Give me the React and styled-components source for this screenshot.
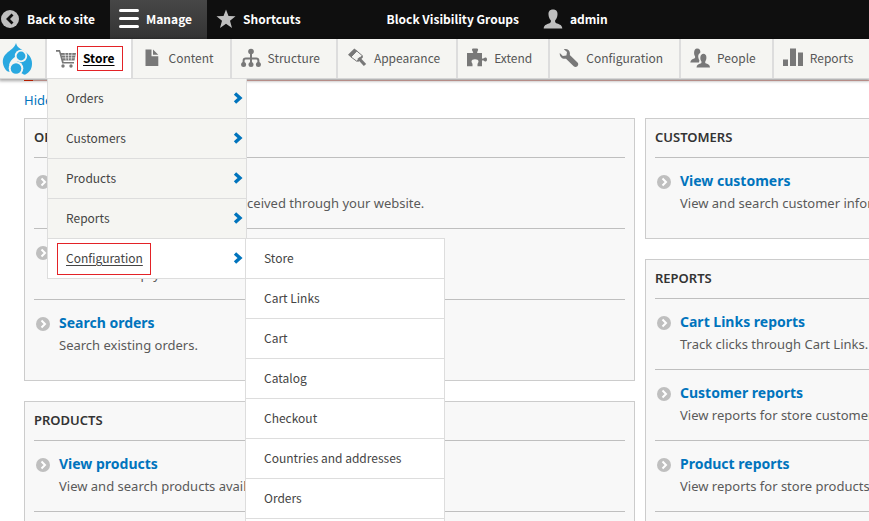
import React from 'react';
import styled, { createGlobalStyle, css } from 'styled-components';

const toolbarFont = '"Noto Sans CJK SC", "Noto Sans", sans-serif';
const bodyFont = '"Noto Sans", "Open Sans", sans-serif';

const Global = createGlobalStyle`
  * { box-sizing: border-box; }
  body { margin: 0; background: #fff; font-family: ${bodyFont}; color: #333; }
  ul { list-style: none; margin: 0; padding: 0; }
  a { text-decoration: none; color: inherit; }
`;

const Page = styled.div`
  height: 100vh;
  overflow: hidden;
`;

const TopBar = styled.nav`
  display: flex;
  height: 39px;
  background: #0f0f0f;
  color: #fff;
  font: 700 12px/38px ${toolbarFont};
  white-space: nowrap;
`;

const TopLink = styled.a`
  display: flex;
  align-items: center;
  gap: 7px;
  flex: none;
  padding: 0 15px 1px ${(p) => (p.$flush ? '0' : '9px')};
  ${(p) => p.$active && css`background: linear-gradient(#474747, #333);`}
  ${(p) => p.$spaced && css`margin-left: 62px;`}
`;

const Tray = styled.nav`
  position: relative;
  z-index: 2;
  display: flex;
  height: 40px;
  background: #f5f5f2;
  border-bottom: 1px solid #d6d6d6;
  box-shadow: 0 1px 3px 1px rgba(0, 0, 0, 0.35);
  font: 12px/36px ${toolbarFont};
  color: #565656;
  white-space: nowrap;
`;

const HomeLink = styled.a`
  flex: none;
  width: 47px;
  display: flex;
  align-items: center;
  border-right: 2px solid #ddd;
`;

const TrayItem = styled.div`
  position: relative;
  flex: none;
  border-right: 2px solid #ddd;
  background: ${(p) => (p.$active ? '#fff' : 'transparent')};
`;

const TrayLink = styled.a`
  display: flex;
  align-items: center;
  gap: 7px;
  height: 38px;
  padding: 0 16px 0 9px;
  ${(p) => p.$active && css`
    color: #000;
    font-weight: 700;
    text-decoration: underline;
    text-underline-offset: 2px;
  `}
`;

const Label = styled.span`
  position: relative;
`;

const Highlight = styled.span`
  position: absolute;
  inset: ${(p) => p.$inset};
  border: 1px solid #e32227;
  pointer-events: none;
`;

const Menu = styled.ul`
  position: absolute;
  top: 39px;
  left: 0;
  width: 200px;
  border: 1px solid #ddd;
  border-bottom: 0;
  background: #f5f5f2;
  color: #444;
`;

const SubMenu = styled(Menu)`
  top: -1px;
  left: 197px;
  padding-bottom: 40px;
  background: #fff;
`;

const MenuRow = styled.li`
  position: relative;
  border-bottom: 1px solid #ddd;
  background: ${(p) => (p.$active ? '#fff' : 'transparent')};
`;

const MenuLink = styled.a`
  display: flex;
  align-items: center;
  justify-content: space-between;
  height: 39px;
  padding: 0 3px 1px 18px;
  text-decoration: ${(p) => (p.$active ? 'underline' : 'none')};
  text-underline-offset: 2px;
`;

const Main = styled.main`
  min-width: 1280px;
  padding: 1px 24px 0;
`;

const MessageEdge = styled.div`
  height: 1px;
  border-left: 9px solid #e62600;
  background: #e8b4ae;
`;

const HideLink = styled.a`
  display: block;
  padding-top: 8px;
  height: 37px;
  font-size: 13px;
  line-height: 22px;
  color: #0074bd;
`;

const Columns = styled.div`
  display: grid;
  grid-template-columns: 1fr 1fr;
  gap: 10px;
  align-items: start;
`;

const Column = styled.div`
  display: grid;
  gap: 20px;
`;

const Panel = styled.section`
  padding: 0 9px 10px;
  border: 1px solid #ccc;
  background: #f8f8f8;
`;

const PanelTitle = styled.h2`
  margin: 0;
  height: 39px;
  border-bottom: 1px solid #bfbfbf;
  font: 600 13px/36px ${bodyFont};
  text-transform: uppercase;
`;

const Entry = styled.li`
  display: flex;
  gap: 9px;
  height: 70px;
  padding: 12px 0 0 2px;
  & + & {
    height: 71px;
    border-top: 1px solid #bfbfbf;
  }
`;

const EntryIcon = styled.svg`
  flex: none;
  margin-top: 5px;
`;

const EntryTitle = styled.a`
  display: block;
  font-weight: 700;
  font-size: 14px;
  line-height: 22px;
  color: #0074bd;
`;

const EntryText = styled.p`
  margin: 0;
  font-size: 13px;
  line-height: 22px;
  color: #5a5a5a;
  white-space: nowrap;
`;

const Svg = ({ children, size = 20, color = '#787878' }) => (
  <svg width={size} height={size} viewBox="0 0 20 20" fill={color} aria-hidden="true">{children}</svg>
);

const icons = {
  back: <><circle cx="10" cy="10" r="9" /><path d="M12.500 5.500 8 10l4.500 4.500" fill="none" stroke="#0f0f0f" strokeWidth="2.800" /></>,
  bars: <path d="M1.500 0h17a1.500 1.500 0 0 1 0 3h-17a1.500 1.500 0 0 1 0-3zM1.500 8h17a1.500 1.500 0 0 1 0 3h-17a1.500 1.500 0 0 1 0-3zM1.500 16h17a1.500 1.500 0 0 1 0 3h-17a1.500 1.500 0 0 1 0-3z" />,
  star: <path d="m10 .5 2.500 6.500 7 .2-5.500 4.500 2 7.300-6-4.200L4 19l2-7.300L.5 7.200l7-.2z" />,
  user: <path d="M10 .5c3.500 0 4.700 2.200 4.500 5-.1 2.500-1 4.500-2.300 5.700-.5 1.500.2 2.600 1.800 3.200 3 1 5 1.600 5.300 5H.7c.3-3.400 2.300-4 5.300-5 1.600-.6 2.300-1.700 1.800-3.200C6.500 10 5.600 8 5.500 5.500c-.2-2.800 1-5 4.500-5z" />,
  cart: <><path d="M0 2h4l1 3h15l-1.500 7.500H7.200l.4 1.500H18v1.500H6.200L3 3.800H0z" /><path d="M5.500 7.300h14M6 9.900h13M9 5l1 7.500M12.500 5v7.500M16 5l-.8 7.500" stroke="#fff" strokeWidth=".6" /><circle cx="7" cy="18" r="1.700" /><circle cx="15" cy="18" r="1.700" /></>,
  file: <path d="M3.500 1.500h6v6.800h6.800V18H3.500zM11 1.500l5.300 5.200H11z" />,
  tree: <><circle cx="10" cy="3.500" r="2.800" /><circle cx="2.600" cy="16.500" r="2.500" /><circle cx="10" cy="16.500" r="2.500" /><circle cx="17.400" cy="16.500" r="2.500" /><path d="M10 4v12M2.600 16v-3.300q0-2.200 2.200-2.200h10.400q2.200 0 2.200 2.200V16" fill="none" stroke="#787878" strokeWidth="2" /></>,
  brush: <><path d="M1 6.700 7.300.4l3 2.400L4.200 9.400z" /><path d="m9.800 3 5.400 4.600-5.500 5.600L4 9z" fill="#f5f5f2" stroke="#787878" strokeWidth="1" /><path d="m11.500 10 6.500 7" fill="none" stroke="#787878" strokeWidth="3.200" /><path d="m15.500 7.300-6 6.300 2 .2 4.500-4.500z" /></>,
  puzzle: <path d="M0 5h5.500c1 0 .8-1 .2-1.500C4.500 1.500 5 .5 6 .5h4c1.200 0 1.500 1.200.5 3-.6.800-.5 1.500.5 1.500h4v5c0 1 1 1 1.700.3C18 9 20 9.200 20 11.500s-2 2.600-3.300 1.300C16 12 15 12.200 15 13.200v5h-4.500v-2c0-1.200 1-1.400 1-2.700 0-1.500-1.500-2.300-3.500-2.300s-3.500.8-3.500 2.300c0 1.300 1 1.500 1 2.700v2H0z" />,
  wrench: <path d="M4.800 1.200C8.700.2 11.700 3 10.800 7l7.700 7.500c2.300 2.500-1.300 6-3.800 3.800L7 10.700C3.200 11.500.3 8.700.8 5l3 3 3.600-.6.600-3.500z" />,
  people: <><path d="M7 .5c2.800 0 3.800 2 3.200 4.500-2.500 1.200-2.400 4.500-.8 7.200L9 14.500H.3c.2-2.600 2-3.300 4-4 1-.4 1-1.500.6-2.500C3.700 6.800 3.500.5 7 .5z" /><path d="M13.500 5.800c3.500 0 3.500 5.500 1.900 7.400-.4 1-.3 2 .8 2.400 2 .6 3.600 1.200 3.800 4H6.500c.2-2.800 2-3.400 4-4 1-.4 1.200-1.400.8-2.400-1.600-1.900-1.400-7.400 2.200-7.400z" /></>,
  chart: <><rect x="0" y="11.500" width="5" height="6.500" /><rect x="7" y=".5" width="6" height="17.500" /><rect x="15" y="4.500" width="5" height="13.500" /></>,
};

const Chevron = () => (
  <svg width="11" height="12" viewBox="0 0 11 12" aria-hidden="true">
    <path d="m3 1.500 5 4.500-5 4.500" fill="none" stroke="#0074bd" strokeWidth="3.400" />
  </svg>
);

const Logo = () => (
  <svg width="34" height="34" viewBox="0 0 34 34" aria-hidden="true">
    <path fill="#29a8e0" d="M16 1c1 4 3 5 7 7.500 6 3.500 9 7.500 9 13 0 5-2 8-5 10-2 1.500-3 1.500-4 .5-1.500-1.500-4-1.300-6.500-.3-3 .5-4.500-.7-6-1.700-2 0-3.500-.7-5-2.500-4-6-3.500-12 1-16 4-4 8-5.500 9.500-10.500z" />
    <circle cx="21" cy="14" r="6.200" fill="#f5f5f2" />
    <circle cx="16" cy="26.500" r="7.300" fill="#f5f5f2" />
    <path d="M15.500 14.500c-3.500 2.500-6 5-6.500 9l5-2 5-3z" fill="#f5f5f2" />
    <circle cx="21" cy="14" r="4.400" fill="#29a8e0" />
    <circle cx="16" cy="26.500" r="5.300" fill="#29a8e0" />
  </svg>
);

const entries = {
  orders: [
    ['View orders', 'View and process the orders received through your website.'],
    ['Create order', 'Create an empty new order.'],
    ['Search orders', 'Search existing orders.'],
  ],
  products: [
    ['View products', 'View and search products available in your store.'],
    ['Create product', 'Create a new product.'],
  ],
  customers: [['View customers', 'View and search customer information and orders.']],
  reports: [
    ['Cart Links reports', 'Track clicks through Cart Links.'],
    ['Customer reports', 'View reports for store customers.'],
    ['Product reports', 'View reports for store products.'],
    ['Sales reports', 'View reports for store sales.'],
  ],
};

const tabs = [
  ['Content', 'file'], ['Structure', 'tree'], ['Appearance', 'brush'], ['Extend', 'puzzle'],
  ['Configuration', 'wrench'], ['People', 'people'], ['Reports', 'chart'],
];

const AdminPanel = ({ title, items }) => (
  <Panel>
    <PanelTitle>{title}</PanelTitle>
    <ul>
      {items.map(([name, text]) => (
        <Entry key={name}>
          <EntryIcon width="14" height="14" viewBox="0 0 14 14" aria-hidden="true">
            <circle cx="7" cy="7" r="7" fill="#bfbfbf" />
            <path d="m5.500 3.500 3.500 3.500-3.500 3.500" fill="none" stroke="#fff" strokeWidth="2" />
          </EntryIcon>
          <div>
            <EntryTitle href="#">{name}</EntryTitle>
            <EntryText>{text}</EntryText>
          </div>
        </Entry>
      ))}
    </ul>
  </Panel>
);

export default function App() {
  return (
    <Page>
      <Global />
      <TopBar aria-label="Administration">
        <TopLink href="#" $flush><Svg color="#bfbfbf">{icons.back}</Svg>Back to site</TopLink>
        <TopLink href="#" $active><Svg color="#fff">{icons.bars}</Svg>Manage</TopLink>
        <TopLink href="#"><Svg color="#bfbfbf">{icons.star}</Svg>Shortcuts</TopLink>
        <TopLink href="#" $spaced>Block Visibility Groups</TopLink>
        <TopLink href="#"><Svg color="#bfbfbf">{icons.user}</Svg>admin</TopLink>
      </TopBar>
      <Tray aria-label="Manage">
        <HomeLink href="#" aria-label="Home"><Logo /></HomeLink>
        <TrayItem $active>
          <TrayLink href="#" $active>
            <Svg>{icons.cart}</Svg>
            <Label>Store<Highlight $inset="6px -8px 5px -6px" /></Label>
          </TrayLink>
          <Menu>
            {['Orders', 'Customers', 'Products', 'Reports'].map((name) => (
              <MenuRow key={name}><MenuLink href="#">{name}<Chevron /></MenuLink></MenuRow>
            ))}
            <MenuRow $active>
              <MenuLink href="#" $active>
                <Label>Configuration<Highlight $inset="3px -8px 1px -9px" /></Label>
                <Chevron />
              </MenuLink>
              <SubMenu>
                {['Store', 'Cart Links', 'Cart', 'Catalog', 'Checkout', 'Countries and addresses', 'Orders'].map((name) => (
                  <MenuRow key={name}><MenuLink href="#">{name}</MenuLink></MenuRow>
                ))}
              </SubMenu>
            </MenuRow>
          </Menu>
        </TrayItem>
        {tabs.map(([name, icon]) => (
          <TrayItem key={name}>
            <TrayLink href="#"><Svg>{icons[icon]}</Svg>{name}</TrayLink>
          </TrayItem>
        ))}
      </Tray>
      <Main>
        <MessageEdge />
        <HideLink href="#">Hide descriptions</HideLink>
        <Columns>
          <Column>
            <AdminPanel title="Orders" items={entries.orders} />
            <AdminPanel title="Products" items={entries.products} />
          </Column>
          <Column>
            <AdminPanel title="Customers" items={entries.customers} />
            <AdminPanel title="Reports" items={entries.reports} />
          </Column>
        </Columns>
      </Main>
    </Page>
  );
}
